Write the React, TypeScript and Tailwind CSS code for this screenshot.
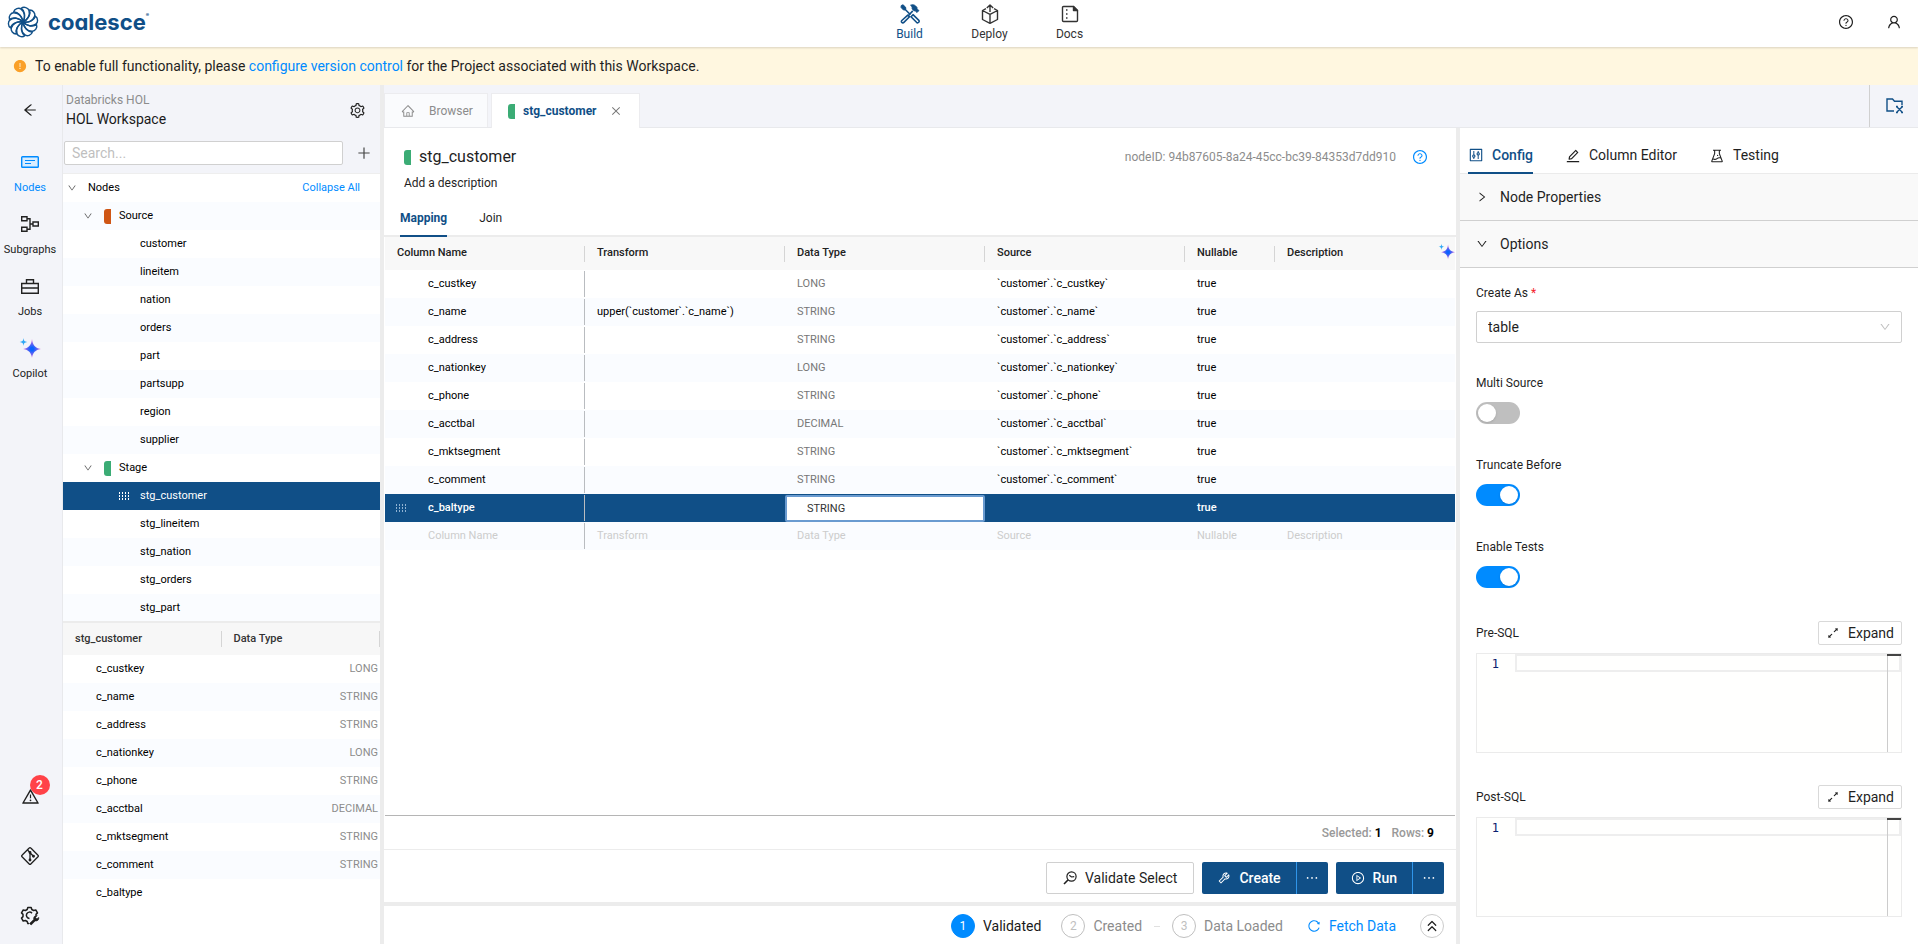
import { useState } from 'react';
import type { ReactNode } from 'react';
import {
  AiFillExclamationCircle,
  AiOutlineArrowLeft,
  AiOutlineClose,
  AiOutlineControl,
  AiOutlineDown,
  AiOutlineEdit,
  AiOutlineEllipsis,
  AiOutlineExpandAlt,
  AiOutlineExperiment,
  AiOutlineHome,
  AiOutlinePlayCircle,
  AiOutlinePlus,
  AiOutlineQuestionCircle,
  AiOutlineReload,
  AiOutlineRight,
  AiOutlineSetting,
  AiOutlineTool,
  AiOutlineUser,
  AiOutlineWarning,
} from 'react-icons/ai';
import { ChevronsUp } from 'lucide-react';

const sourceNodes = ['customer', 'lineitem', 'nation', 'orders', 'part', 'partsupp', 'region', 'supplier'];
const stageNodes = ['stg_customer', 'stg_lineitem', 'stg_nation', 'stg_orders', 'stg_part'];

const columns = [
  { name: 'c_custkey', transform: '', type: 'LONG' },
  { name: 'c_name', transform: 'upper(`customer`.`c_name`)', type: 'STRING' },
  { name: 'c_address', transform: '', type: 'STRING' },
  { name: 'c_nationkey', transform: '', type: 'LONG' },
  { name: 'c_phone', transform: '', type: 'STRING' },
  { name: 'c_acctbal', transform: '', type: 'DECIMAL' },
  { name: 'c_mktsegment', transform: '', type: 'STRING' },
  { name: 'c_comment', transform: '', type: 'STRING' },
];

const petals = [0, 36, 72, 108, 144, 180, 216, 252, 288, 324];

/* ---------- ICONS ---------- */

function LogoMark() {
  return (
    <svg width="32" height="32" viewBox="-16 -16 32 32" fill="none" stroke="#104f87" strokeWidth="1.4" strokeLinejoin="round">
      {petals.map((angle) => (
        <path
          key={angle}
          transform={`rotate(${angle})`}
          d="M0 0C4.500 -2 7.500 -6.500 6 -11.500C5.300 -14.300 .8 -15.800 -1.800 -13.600C1.800 -11.500 2.800 -6 0 0"
        />
      ))}
    </svg>
  );
}

function BuildIcon() {
  return (
    <svg width="20" height="20" viewBox="0 0 20 20" fill="none" stroke="currentColor" strokeWidth="1.600" strokeLinejoin="round">
      <path d="M1.300 1.500 3 .8l2.600 2.400.2 1.900L5 6 3.200 5.800 1 3.300z" fill="currentColor" strokeWidth="1" />
      <path d="m5 5.300 5.500 5.500M8.500 11.500l4.300-4.600" />
      <path d="M10.500 1.200c2-.9 3.700-.6 5.200.8l1.300 1.400v1.500l2 1.700-2 2-1.900-1.800-1 .1-2-2c.3-1.600-.3-2.700-1.600-3.700z" fill="currentColor" strokeWidth=".8" />
      <path d="m7.800 11.200-6 5.300c-.6.700-.5 1.500.1 2 .5.500 1.400.5 2-.1l5.600-5.600zM11 12.700l2-2 5.600 5.400c.7.700.6 1.600.1 2.200-.6.600-1.500.6-2.200 0z" />
    </svg>
  );
}

function DeployIcon() {
  return (
    <svg width="18" height="20" viewBox="0 0 18 20" fill="none" stroke="currentColor" strokeWidth="1.400" strokeLinejoin="round">
      <path d="M5 4.700 1.500 6.500v9L9 19.300l7.500-3.800v-9L13 4.700M1.500 6.500 9 10.300l7.500-3.800M9 10.300v9M9 8V.9M5.800 4 9 .9 12.200 4" />
    </svg>
  );
}

function DocsIcon() {
  return (
    <svg width="18" height="18" viewBox="0 0 18 18" fill="none" stroke="currentColor" strokeWidth="1.400" strokeLinejoin="round">
      <path d="M12.500 1.500H2.500a1 1 0 0 0-1 1v13a1 1 0 0 0 1 1h13a1 1 0 0 0 1-1v-10z" />
      <path d="M12.500 1.500v4h4z" fill="currentColor" />
      <path d="M5 5h1.500M5 9h1.500M5 13h1.500" />
    </svg>
  );
}

function NodesIcon() {
  return (
    <svg width="18" height="12" viewBox="0 0 18 12" fill="none" stroke="currentColor">
      <rect x=".7" y=".7" width="16.600" height="10.600" rx=".8" strokeWidth="1.400" fill="#d9edff" />
      <path d="M4 4.500h10M4 7.500h6" strokeWidth="1.200" />
    </svg>
  );
}

function SubgraphsIcon() {
  return (
    <svg width="18" height="16" viewBox="0 0 18 16" fill="none" stroke="currentColor" strokeWidth="1.400">
      <path d="M.7.700h5.300v4H.7zM.7 11.300h5.300v4H.7zM12 6h5.300v4H12zM6 2.700h3v10.600H6M9 8h3" />
    </svg>
  );
}

function JobsIcon() {
  return (
    <svg width="18" height="15" viewBox="0 0 18 15" fill="none" stroke="currentColor" strokeWidth="1.400">
      <path d="M.7 4.500h16.600v9.800H.7zM5.500 4.500V.8h7v3.700M.7 9h3.600M5.700 9h6.600M13.700 9h3.600" />
      <path d="M5 8v2M13 8v2" />
    </svg>
  );
}

function SparkIcon({ size, id }: { size: number; id: string }) {
  return (
    <svg width={size} height={size} viewBox="0 0 22 20">
      <defs>
        <radialGradient id={id} cx="13" cy="11" r="8.500" gradientUnits="userSpaceOnUse">
          <stop offset=".2" stopColor="#0a62ff" />
          <stop offset=".6" stopColor="#6a63f0" />
          <stop offset="1" stopColor="#d57fe6" />
        </radialGradient>
      </defs>
      <path d="M13 1c1 6.500 3 8.900 9 10-6 1.100-8 3.500-9 9-1-5.500-3-7.900-9-9 6-1.100 8-3.500 9-10z" fill={`url(#${id})`} />
      <path d="M4.500 0c.4 2.900 1 3.600 3.800 4-2.800.4-3.400 1.100-3.800 4C4.100 5.100 3.500 4.400.7 4c2.800-.4 3.400-1.100 3.800-4z" fill="#2fa8f5" />
    </svg>
  );
}

function GitIcon() {
  return (
    <svg width="18" height="18" viewBox="0 0 18 18" fill="none" stroke="currentColor" strokeWidth="1.300" strokeLinejoin="round">
      <path d="M8.200 1 1 8.200a1.100 1.100 0 0 0 0 1.600L8.200 17a1.100 1.100 0 0 0 1.600 0L17 9.800a1.100 1.100 0 0 0 0-1.600L9.800 1a1.100 1.100 0 0 0-1.600 0z" />
      <path d="M6.500 3 9 5.500v8M9 5.700l3.500 3.600" />
      <circle cx="9" cy="13" r=".8" fill="currentColor" />
      <circle cx="12.500" cy="9.300" r=".8" fill="currentColor" />
      <circle cx="9" cy="5.500" r=".8" fill="currentColor" />
    </svg>
  );
}

function SettingsToolIcon() {
  return (
    <svg width="20" height="20" viewBox="0 0 20 20" fill="none" stroke="currentColor" strokeWidth="1.500" strokeLinejoin="round">
      <path d="M9 17.500H7.800l-.6-2-1.800-1-2.200.5-1.700-2.900 1.500-1.500V8.400L1.500 6.900 3.200 4l2.200.5 1.800-1 .6-2h3.400l.6 2 1.800 1 2.200-.5 1.700 2.900-1.500 1.500v1" />
      <path d="M12 7.200a3.200 3.200 0 1 0-2.500 5.300" />
      <path d="m9.500 17.500 4.200-4c-.5-2.400 1-4.300 3.500-3.900l-1.600 1.800 1.300 1.400 1.900-1.400c.4 2.400-1.400 4-3.600 3.500l-4 4.100z" fill="currentColor" strokeWidth=".6" />
    </svg>
  );
}

function FolderCloseIcon() {
  return (
    <svg width="18" height="16" viewBox="0 0 18 16" fill="none" stroke="currentColor" strokeWidth="1.400">
      <path d="M8 13H1V1h5.500l2 2.200H16V7M10.500 8.500l6 6M16.500 8.500l-6 6" />
      <path d="M10 8.500h1.800M15.200 8.500H17M10 14.600h1.800M15.200 14.600H17" />
    </svg>
  );
}

function ValidateIcon() {
  return (
    <svg width="14" height="14" viewBox="0 0 14 14" fill="none" stroke="currentColor" strokeWidth="1.200">
      <circle cx="8.500" cy="5.500" r="4.600" />
      <path d="M5.200 8.800 1 13" strokeWidth="1.600" />
      <path d="M6.300 4.200 8.500 6l2.700-.3" />
    </svg>
  );
}

function DragDots({ className }: { className?: string }) {
  return (
    <svg width="12" height="8" viewBox="0 0 12 8" fill="currentColor" className={className}>
      {[0, 3, 6, 9].map((x) => [0, 3, 6].map((y) => <rect key={`${x}-${y}`} x={x + 1} y={y} width="1" height="2" />))}
    </svg>
  );
}

/* ---------- SMALL PARTS ---------- */

function NavItem({ icon, label, active }: { icon: ReactNode; label: string; active?: boolean }) {
  return (
    <a href="#" className={`flex w-20 flex-col items-center text-[12px] leading-4 ${active ? 'text-[#104f87]' : 'text-[#333]'}`}>
      <span className="flex h-6 items-center">{icon}</span>
      {label}
    </a>
  );
}

function RailItem({ icon, label, active }: { icon: ReactNode; label: string; active?: boolean }) {
  return (
    <button className={`flex h-[62px] w-full flex-col items-center text-[11px] leading-5 ${active ? 'text-[#008bff]' : 'text-[#222]'}`}>
      <span className="flex h-8 items-center">{icon}</span>
      {label}
    </button>
  );
}

function Chip({ color }: { color: string }) {
  return <span className={`h-[15px] w-[7px] shrink-0 rounded-l-[3px] ${color}`} />;
}

function TreeGroup({ label, color, zebra }: { label: string; color: string; zebra?: boolean }) {
  return (
    <li className={`flex h-7 items-center pl-5 ${zebra ? 'bg-[#fafcff]' : ''}`}>
      <AiOutlineDown size={10} className="text-[#555]" />
      <span className="ml-[11px] flex items-center gap-2">
        <Chip color={color} />
        {label}
      </span>
    </li>
  );
}

function TreeLeaf({ label, zebra, selected }: { label: string; zebra?: boolean; selected?: boolean }) {
  return (
    <li className={`flex h-7 items-center ${selected ? 'bg-[#104f87] text-white' : zebra ? 'bg-[#fafcff]' : ''}`}>
      <span className="flex w-[77px] justify-end pr-2.5">{selected && <DragDots />}</span>
      {label}
    </li>
  );
}

function Toggle({ label, defaultOn }: { label: string; defaultOn?: boolean }) {
  const [on, setOn] = useState(!!defaultOn);
  return (
    <label className="relative flex h-[82px] flex-col items-start text-[12px] leading-4">
      {label}
      <input type="checkbox" role="switch" checked={on} onChange={() => setOn(!on)} className="sr-only" />
      <span className={`mt-[11px] flex h-[22px] w-11 items-center rounded-full p-0.5 ${on ? 'justify-end bg-[#008bff]' : 'bg-[#bfbfbf]'}`}>
        <span className="size-[18px] rounded-full bg-white shadow-sm" />
      </span>
    </label>
  );
}

function SqlEditor({ id, label }: { id: string; label: string }) {
  return (
    <div className="h-[164px]">
      <div className="flex items-center justify-between">
        <label htmlFor={id} className="text-[12px]">{label}</label>
        <button className="flex h-6 w-[84px] items-center justify-center gap-2 rounded-xs border border-[#d9d9d9] bg-white text-[14px]">
          <AiOutlineExpandAlt size={14} />
          Expand
        </button>
      </div>
      <div className="mt-2 flex h-[100px] border border-[#ebebeb] bg-[#fffffe]">
        <span className="w-[38px] pr-4 pt-px text-right font-['DejaVu_Sans_Mono',monospace] text-[12px] leading-[18px] text-[#0b216f]">1</span>
        <div className="relative flex-1">
          <textarea id={id} rows={1} className="block h-[18px] w-full resize-none border-2 border-[#eee] bg-transparent outline-none" />
          <span className="absolute inset-y-0 right-0 w-3.5 border-l border-[#ccc]" />
          <span className="absolute right-0 top-0 h-0.5 w-3.5 bg-[#444]" />
        </div>
      </div>
    </div>
  );
}

function HeadCell({ label }: { label: string }) {
  return (
    <th className="p-0 text-left font-medium">
      <div className="flex h-4 items-center border-r border-[#d5d5d5] pl-3">{label}</div>
    </th>
  );
}

/* ---------- PANELS ---------- */

function TopBar() {
  return (
    <header className="relative z-10 flex h-[47px] shrink-0 items-center bg-white shadow-[0_1px_2px_rgba(0,0,0,0.15)]">
      <div className="flex flex-1 items-center gap-[9px] pb-1 pl-[7px] text-[#104f87]">
        <LogoMark />
        <span className="flex items-start font-['Inter',sans-serif] text-[22px] font-bold leading-7 [font-feature-settings:'cv11']">
          coalesce
          <span className="text-[5px] leading-[14px]">®</span>
        </span>
      </div>
      <nav className="flex pb-1 pl-[70px]">
        <NavItem icon={<BuildIcon />} label="Build" active />
        <NavItem icon={<DeployIcon />} label="Deploy" />
        <NavItem icon={<DocsIcon />} label="Docs" />
      </nav>
      <div className="flex flex-1 items-center justify-end gap-8 pb-1 pr-4">
        <button aria-label="Help"><AiOutlineQuestionCircle size={16} /></button>
        <button aria-label="Account"><AiOutlineUser size={16} /></button>
      </div>
    </header>
  );
}

function Rail() {
  return (
    <aside className="flex w-[62px] shrink-0 flex-col items-center pr-0.5">
      <button aria-label="Back" className="mt-[17px]"><AiOutlineArrowLeft size={16} /></button>
      <nav className="mt-7 flex w-full flex-col">
        <RailItem icon={<NodesIcon />} label="Nodes" active />
        <RailItem icon={<SubgraphsIcon />} label="Subgraphs" />
        <RailItem icon={<JobsIcon />} label="Jobs" />
        <RailItem icon={<SparkIcon size={22} id="spark-rail" />} label="Copilot" />
      </nav>
      <div className="mt-auto flex flex-col items-center gap-[41px] pb-[18px]">
        <button aria-label="Problems" className="relative">
          <AiOutlineWarning size={19} />
          <span className="absolute -top-3 left-[9px] flex size-5 items-center justify-center rounded-full bg-[#ff4248] text-[12px] font-medium text-white">2</span>
        </button>
        <button aria-label="Git"><GitIcon /></button>
        <button aria-label="Build settings"><SettingsToolIcon /></button>
      </div>
    </aside>
  );
}

function Sidebar() {
  return (
    <aside className="flex w-[318px] shrink-0 flex-col border-l border-[#e8e9ec] text-[11px] text-black">
      <div className="flex h-[50px] items-center justify-between pl-[3px] pr-3.5 pt-0.5">
        <div>
          <div className="text-[12px] leading-4 text-[#8c8c8c]">Databricks HOL</div>
          <div className="text-[14px] leading-[22px] text-[#1a1a1a]">HOL Workspace</div>
        </div>
        <button aria-label="Workspace settings" className="mb-0.5 text-[#222]"><AiOutlineSetting size={17} /></button>
      </div>
      <div className="flex items-center gap-[13px] pb-2 pl-px pr-2 pt-1.5">
        <input
          type="text"
          aria-label="Search nodes"
          placeholder="Search..."
          className="h-6 min-w-0 flex-1 rounded-xs border border-[#d0d0d0] bg-white px-[7px] text-[14px] outline-none placeholder:text-[#bfbfbf]"
        />
        <button aria-label="Add node" className="text-[#444]"><AiOutlinePlus size={16} /></button>
      </div>
      <ul className="min-h-0 flex-1 overflow-hidden border-t border-[#eee] bg-white">
        <li className="flex h-7 items-center justify-between pl-1 pr-5">
          <span className="flex items-center gap-[11px]">
            <AiOutlineDown size={10} className="text-[#555]" />
            Nodes
          </span>
          <button className="text-[#008bff]">Collapse All</button>
        </li>
        <TreeGroup label="Source" color="bg-[#cf5615]" zebra />
        {sourceNodes.map((name, i) => (
          <TreeLeaf key={name} label={name} zebra={i % 2 === 1} />
        ))}
        <TreeGroup label="Stage" color="bg-[#3bac75]" />
        {stageNodes.map((name, i) => (
          <TreeLeaf key={name} label={name} zebra={i > 0 && i % 2 === 0} selected={i === 0} />
        ))}
      </ul>
      <div className="border-t-2 border-[#ececec] bg-white pb-[37px]">
        <table className="w-full table-fixed border-collapse">
          <thead>
            <tr className="h-8 bg-[#f7f7f7] text-[#333]">
              <HeadCell label="stg_customer" />
              <HeadCell label="Data Type" />
            </tr>
          </thead>
          <tbody>
            {columns.map((col, i) => (
              <tr key={col.name} className={`h-7 ${i % 2 ? 'bg-[#fafcff]' : ''}`}>
                <td className="p-0 pl-[33px]">{col.name}</td>
                <td className="p-0 pr-0.5 text-right text-[#8c8c8c]">{col.type}</td>
              </tr>
            ))}
            <tr className="h-7">
              <td className="p-0 pl-[33px]">c_baltype</td>
              <td />
            </tr>
          </tbody>
        </table>
      </div>
    </aside>
  );
}

function TabBar() {
  return (
    <div className="flex h-[43px] shrink-0 border-b border-[#e8e9ec]">
      <div className="flex flex-1 items-end gap-[3px]">
        <button className="flex h-[34px] w-[104px] items-center gap-3.5 border border-b-0 border-[#ececef] bg-[#fafbfd] pl-4 text-[12px] text-[#8c8c8c]">
          <AiOutlineHome size={14} />
          Browser
        </button>
        <div className="-mb-px flex h-[35px] w-[149px] items-center border border-b-0 border-[#ececef] bg-white pl-4 text-[12px] font-bold text-[#104f87]">
          <Chip color="bg-[#3bac75]" />
          <span className="ml-2 flex-1">stg_customer</span>
          <button aria-label="Close tab" className="mr-[17px] text-[#777]"><AiOutlineClose size={12} /></button>
        </div>
      </div>
      <button aria-label="Hide panel" className="flex w-[49px] items-center border-l border-[#d0d0d0] pl-4 text-[#104f87]">
        <FolderCloseIcon />
      </button>
    </div>
  );
}

function MappingTable() {
  const divider = 'h-[26px] border-r border-[#b9bcc0] flex items-center pl-[43px]';
  return (
    <table className="w-full table-fixed border-collapse text-[11px] text-black">
      <colgroup>
        <col className="w-[200px]" />
        <col className="w-[200px]" />
        <col className="w-[200px]" />
        <col className="w-[200px]" />
        <col className="w-[90px]" />
        <col />
      </colgroup>
      <thead>
        <tr className="h-[33px] bg-[#f8f8f8] text-[#222]">
          <HeadCell label="Column Name" />
          <HeadCell label="Transform" />
          <HeadCell label="Data Type" />
          <HeadCell label="Source" />
          <HeadCell label="Nullable" />
          <th className="p-0 text-left font-medium">
            <div className="flex items-center justify-between pl-3">
              Description
              <button aria-label="Generate descriptions" className="mb-1"><SparkIcon size={17} id="spark-head" /></button>
            </div>
          </th>
        </tr>
      </thead>
      <tbody>
        {columns.map((col, i) => (
          <tr key={col.name} className={`h-7 ${i % 2 ? 'bg-[#fafcff]' : ''}`}>
            <td className="p-0"><div className={divider}>{col.name}</div></td>
            <td className="p-0 pl-3">{col.transform}</td>
            <td className="p-0 pl-3 text-[#777]">{col.type}</td>
            <td className="p-0 pl-3">{`\`customer\`.\`${col.name}\``}</td>
            <td className="p-0 pl-3">true</td>
            <td />
          </tr>
        ))}
        <tr className="h-7 bg-[#104f87] font-medium text-white">
          <td className="p-0">
            <div className="flex h-[26px] items-center border-r border-[#b9bcc0] pl-2.5">
              <DragDots className="mr-[21px] text-[#8fb2d2]" />
              c_baltype
            </div>
          </td>
          <td />
          <td className="p-0">
            <input
              type="text"
              aria-label="Data type"
              defaultValue="STRING"
              className="block h-[27px] w-full rounded-xs border-2 border-[#6a9bd0] bg-white px-5 font-normal text-[#333] outline-none"
            />
          </td>
          <td />
          <td className="p-0 pl-3">true</td>
          <td />
        </tr>
        <tr className="h-7 bg-[#fafcff] text-[#ccc]">
          <td className="p-0"><div className={divider}>Column Name</div></td>
          <td className="p-0 pl-3">Transform</td>
          <td className="p-0 pl-3">Data Type</td>
          <td className="p-0 pl-3">Source</td>
          <td className="p-0 pl-3">Nullable</td>
          <td className="p-0 pl-3">Description</td>
        </tr>
      </tbody>
    </table>
  );
}

function SplitButton({ icon, label }: { icon: ReactNode; label: string }) {
  return (
    <div className="flex h-8 overflow-hidden rounded-xs bg-[#104f87] text-[14px] font-medium text-white">
      <button className="flex items-center gap-2 px-[15px]">
        {icon}
        {label}
      </button>
      <button aria-label={`${label} options`} className="flex w-8 items-center justify-center border-l border-[#2f95ea]">
        <AiOutlineEllipsis size={16} />
      </button>
    </div>
  );
}

function Step({ n, label, active }: { n: number; label: string; active?: boolean }) {
  return (
    <li className={`flex items-center gap-2 ${active ? 'text-[#1a1a1a]' : 'text-[#8c8c8c]'}`}>
      <span className={`flex size-6 items-center justify-center rounded-full border text-[12px] ${active ? 'border-[#008bff] bg-[#008bff] text-white' : 'border-[#bfbfbf] text-[#bfbfbf]'}`}>{n}</span>
      {label}
    </li>
  );
}

function Editor() {
  return (
    <main className="flex min-w-0 flex-1 flex-col bg-white">
      <div className="flex items-center justify-between pl-5 pr-7 pt-[17px]">
        <h1 className="flex items-center gap-2 text-[16px] leading-6">
          <Chip color="bg-[#3bac75]" />
          stg_customer
        </h1>
        <div className="flex items-center gap-4 text-[12px] text-[#8c8c8c]">
          nodeID: 94b87605-8a24-45cc-bc39-84353d7dd910
          <button aria-label="Node help" className="text-[#008bff]"><AiOutlineQuestionCircle size={16} /></button>
        </div>
      </div>
      <p className="mt-1.5 pl-5 text-[12px] leading-4">Add a description</p>
      <div className="mt-2.5 flex h-9 gap-8 border-b-2 border-[#ececec] pl-4 text-[12px]">
        <button className="-mb-0.5 border-b-2 border-[#104f87] font-bold text-[#104f87]">Mapping</button>
        <button className="-mb-0.5 border-b-2 border-transparent">Join</button>
      </div>
      <div className="mx-px min-h-0 flex-1 overflow-hidden border-b border-[#b5b5b5]">
        <MappingTable />
      </div>
      <div className="flex h-[34px] items-center justify-end gap-2.5 border-b border-[#ececec] pr-[22px] text-[12px] font-medium text-[#999]">
        <span>Selected: <b className="text-black">1</b></span>
        <span>Rows: <b className="text-black">9</b></span>
      </div>
      <div className="flex justify-end gap-2 border-b-4 border-[#ececec] pb-2 pr-3 pt-3">
        <button className="flex h-8 items-center gap-2 rounded-xs border border-[#d0d0d0] px-4 text-[14px]">
          <ValidateIcon />
          Validate Select
        </button>
        <SplitButton icon={<AiOutlineTool size={14} />} label="Create" />
        <SplitButton icon={<AiOutlinePlayCircle size={14} />} label="Run" />
      </div>
      <div className="flex h-[38px] items-center justify-end pr-3 pt-0.5 text-[14px]">
        <ol className="flex items-center">
          <Step n={1} label="Validated" active />
          <li className="w-5" />
          <Step n={2} label="Created" />
          <li className="mx-3 h-px w-1.5 bg-[#e0e0e0]" />
          <Step n={3} label="Data Loaded" />
        </ol>
        <button className="ml-6 flex items-center gap-2 text-[#008bff]">
          <AiOutlineReload size={14} />
          Fetch Data
        </button>
        <button aria-label="Expand results" className="ml-6 flex size-6 items-center justify-center rounded-full border border-[#ccc]">
          <ChevronsUp size={18} strokeWidth={1.6} />
        </button>
      </div>
    </main>
  );
}

function ConfigPanel() {
  return (
    <aside className="flex w-[462px] shrink-0 flex-col overflow-hidden border-l-4 border-[#ececec] bg-white">
      <div className="flex h-[46px] shrink-0 gap-8 border-b border-[#ebebeb] pl-2 pt-2.5 text-[14px]">
        <button className="-mb-px flex items-center gap-2 border-b-2 border-[#104f87] font-medium text-[#104f87]">
          <AiOutlineControl size={16} />
          Config
        </button>
        <button className="flex items-center gap-2">
          <AiOutlineEdit size={16} />
          Column Editor
        </button>
        <button className="flex items-center gap-2">
          <AiOutlineExperiment size={16} />
          Testing
        </button>
      </div>
      <button className="flex h-[47px] shrink-0 items-center gap-3 border-b border-[#d0d0d0] bg-[#f9f9f9] pl-4 text-[14px]">
        <AiOutlineRight size={12} />
        Node Properties
      </button>
      <button className="flex h-[47px] shrink-0 items-center gap-3 border-b border-[#d0d0d0] bg-[#f9f9f9] pl-4 text-[14px]">
        <AiOutlineDown size={12} />
        Options
      </button>
      <div className="shrink-0 px-4 pt-[17px]">
        <label htmlFor="create-as" className="block text-[12px] leading-4">
          Create As <span className="text-[#f5222d]">*</span>
        </label>
        <div className="relative mb-8 mt-2.5">
          <select id="create-as" className="h-8 w-full appearance-none rounded-xs border border-[#d0d0d0] bg-white px-[11px] text-[14px] outline-none">
            <option>table</option>
          </select>
          <AiOutlineDown size={12} className="pointer-events-none absolute right-[11px] top-2.5 text-[#bfbfbf]" />
        </div>
        <Toggle label="Multi Source" />
        <Toggle label="Truncate Before" defaultOn />
        <Toggle label="Enable Tests" defaultOn />
        <SqlEditor id="pre-sql" label="Pre-SQL" />
        <SqlEditor id="post-sql" label="Post-SQL" />
      </div>
      <div className="min-h-3 flex-1 border-t border-[#d0d0d0] bg-[#f9f9f9]" />
    </aside>
  );
}

export default function App() {
  return (
    <div className="flex h-screen flex-col overflow-hidden whitespace-nowrap bg-[#f3f4f9] font-['Roboto',sans-serif] text-[#1f1f1f]">
      <TopBar />
      <div className="flex h-[38px] shrink-0 items-center gap-2 bg-[#fff7e0] pl-[13px] text-[14px]">
        <AiFillExclamationCircle size={14} className="text-[#faa028]" />
        <p>
          To enable full functionality, please <a href="#" className="text-[#008bff]">configure version control</a> for the Project associated with this Workspace.
        </p>
      </div>
      <div className="flex min-h-0 flex-1">
        <Rail />
        <Sidebar />
        <div className="flex min-w-0 flex-1 flex-col border-l-4 border-[#ececec]">
          <TabBar />
          <div className="flex min-h-0 flex-1">
            <Editor />
            <ConfigPanel />
          </div>
        </div>
      </div>
    </div>
  );
}
